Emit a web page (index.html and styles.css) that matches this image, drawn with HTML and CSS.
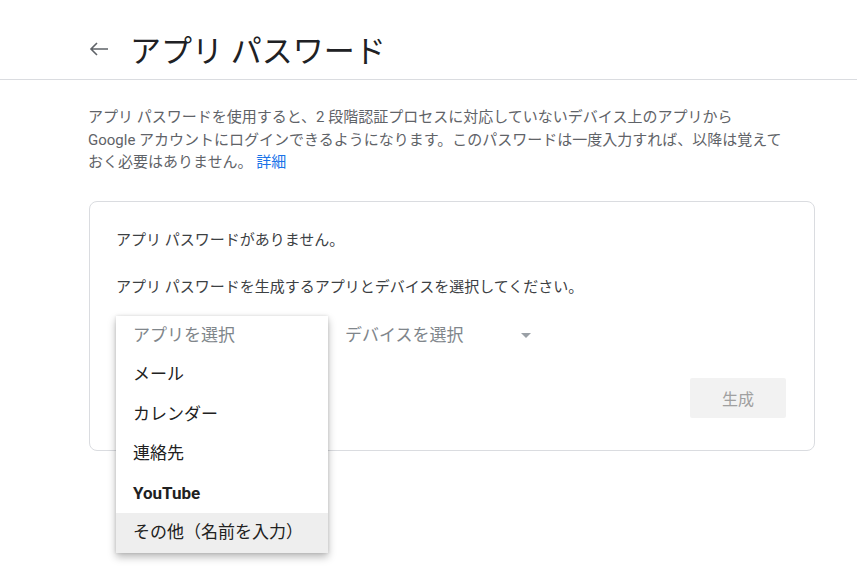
FILE: index.html
```html
<!DOCTYPE html>
<html lang="ja">
<head>
  <meta charset="UTF-8">
  <title>アプリ パスワード</title>
  <meta name="viewport" content="width=device-width, initial-scale=1.0">
  <link rel="stylesheet" href="styles.css">
</head>
<body>

  <header class="top">
    <svg class="back" width="20" height="16" viewBox="0 0 20 16">
      <path d="M19 8H2M8 2L2 8l6 6" fill="none" stroke="#5f6368" stroke-width="1.6"/>
    </svg>
    <h1>アプリ パスワード</h1>
  </header>

  <main class="content">
    <p class="intro">
      アプリ パスワードを使用すると、2 段階認証プロセスに対応していないデバイス上のアプリから<br>
      Google アカウントにログインできるようになります。このパスワードは一度入力すれば、以降は覚えて<br>
      おく必要はありません。 <a href="#">詳細</a>
    </p>

    <section class="card">
      <p class="empty">アプリ パスワードがありません。</p>
      <p class="hint">アプリ パスワードを生成するアプリとデバイスを選択してください。</p>

      <div class="selects">
        <div class="select app">
          <span class="placeholder">アプリを選択</span>
          <!-- open menu -->
          <ul class="menu">
            <li class="placeholder">アプリを選択</li>
            <li>メール</li>
            <li>カレンダー</li>
            <li>連絡先</li>
            <li class="bold">YouTube</li>
            <li class="active">その他（名前を入力）</li>
          </ul>
        </div>
        <div class="select device">
          <span class="placeholder">デバイスを選択</span>
          <span class="caret"></span>
        </div>
      </div>

      <div class="actions">
        <button class="generate" disabled>生成</button>
      </div>
    </section>
  </main>

</body>
</html>
```

FILE: styles.css
```css
html, body {
  height: 100%;
}

body {
  margin: 0;
  background: #fff;
  font-family: Roboto, "Noto Sans CJK JP", sans-serif;
  color: #202124;
}

.top {
  height: 80px;
  box-sizing: border-box;
  padding: 18px 0 0 89px;
  display: flex;
  align-items: center;
  gap: 21px;
  border-bottom: 1px solid #dadce0;
}

.top h1 {
  margin: 0;
  font-size: 31px;
  font-weight: 400;
  color: #202124;
}

.content {
  padding: 26px 0 110px 88px;
}

.intro {
  margin: 0;
  font-size: 15px;
  line-height: 22.5px;
  color: #5f6368;
}

.intro a {
  color: #1a73e8;
  text-decoration: none;
}

.card {
  margin: 27px 0 0 1px;
  width: 726px;
  box-sizing: border-box;
  border: 1px solid #dadce0;
  border-radius: 8px;
  padding: 27px 28px 32px 26px;
  font-size: 15px;
  line-height: 23px;
  color: #3c4043;
}

.card p {
  margin: 0;
}

.card .hint {
  margin-top: 24px;
}

.selects {
  margin-top: 17px;
  display: flex;
  gap: 15px;
}

.select {
  position: relative;
  height: 40px;
  display: flex;
  align-items: center;
  font-size: 17px;
}

.select.app {
  width: 212px;
  padding-left: 17px;
  box-sizing: border-box;
}

.select.device {
  width: 200px;
  padding-left: 2px;
  justify-content: space-between;
}

.placeholder {
  color: #80868b;
}

.caret {
  width: 0;
  height: 0;
  margin-right: 14px;
  border-left: 5px solid transparent;
  border-right: 5px solid transparent;
  border-top: 5px solid #9aa0a6;
}

.menu {
  position: absolute;
  top: 0;
  left: 0;
  z-index: 10;
  width: 212px;
  margin: 0;
  padding: 0;
  list-style: none;
  background: #fff;
  box-shadow: 0 4px 8px rgba(0, 0, 0, 0.28), 0 0 3px rgba(0, 0, 0, 0.12);
}

.menu li {
  height: 39.5px;
  line-height: 39.5px;
  padding-left: 17px;
  color: #212121;
  white-space: nowrap;
}

.menu li.placeholder {
  color: #80868b;
}

.menu li.bold {
  font-weight: 700;
}

.menu li.active {
  background: #eeeeee;
}

.actions {
  margin-top: 22px;
  display: flex;
  justify-content: flex-end;
}

.generate {
  width: 96px;
  height: 40px;
  border: none;
  border-radius: 2px;
  background: #f2f2f2;
  color: #a0a0a0;
  font-family: inherit;
  font-size: 16px;
}
```
